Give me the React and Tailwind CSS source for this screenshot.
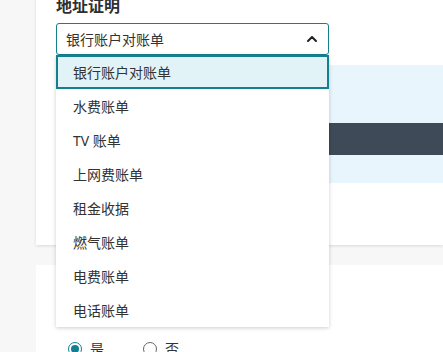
import { ChevronUp } from "lucide-react";

const options = [
  "银行账户对账单",
  "水费账单",
  "TV 账单",
  "上网费账单",
  "租金收据",
  "燃气账单",
  "电费账单",
  "电话账单",
];

export default function App() {
  return (
    <div
      className="h-[352px] w-[443px] overflow-hidden bg-[#f7f7f7] text-[#333]"
      style={{ fontFamily: '"Noto Sans", "Noto Sans CJK SC", sans-serif' }}
    >
      {/* first card */}
      <div className="relative ml-[36px] -mt-[6px] bg-white pl-[20px] pb-[62px] shadow-[0_1px_3px_rgba(0,0,0,0.12)]">
        <div className="h-[29px] pt-[2px] text-[16px] font-bold leading-[20px] text-[#2f2f2f]">
          地址证明
        </div>
        <div className="relative w-[273px]">
          <div className="flex h-[32px] items-center justify-between rounded-[3px] border border-[#12808f] pl-[9px] pr-[8px] text-[14px]">
            <span>银行账户对账单</span>
            <ChevronUp className="h-[16px] w-[16px] text-[#222]" strokeWidth={3} />
          </div>

          {/* open list */}
          <ul className="absolute left-0 top-[32px] z-10 w-[273px] bg-white shadow-[0_1px_4px_rgba(0,0,0,0.2)]">
            {options.map((opt, i) => (
              <li
                key={opt}
                className={
                  i === 0
                    ? "flex h-[34px] items-center border-2 border-[#12808f] bg-[#e1f3f7] pl-[15px] text-[14px]"
                    : "flex h-[34px] items-center pl-[17px] text-[14px]"
                }
              >
                {opt}
              </li>
            ))}
          </ul>
        </div>

        <div className="mt-[10px] bg-[#e8f5fd] pt-[58px] pb-[28px]">
          <div className="h-[32px] bg-[#3e4a58]" />
        </div>
      </div>

      {/* second card */}
      <div className="ml-[36px] mt-[20px] h-[120px] bg-white pl-[32px] pt-[73px]">
        <div className="flex items-center text-[14px]">
          <label className="flex items-center gap-[8px]">
            <span className="flex h-[14px] w-[14px] items-center justify-center rounded-full border border-[#12808f]">
              <span className="h-[8px] w-[8px] rounded-full bg-[#12808f]" />
            </span>
            是
          </label>
          <label className="ml-[39px] flex items-center gap-[8px]">
            <span className="h-[14px] w-[14px] rounded-full border border-[#666]" />
            否
          </label>
        </div>
      </div>
    </div>
  );
}
